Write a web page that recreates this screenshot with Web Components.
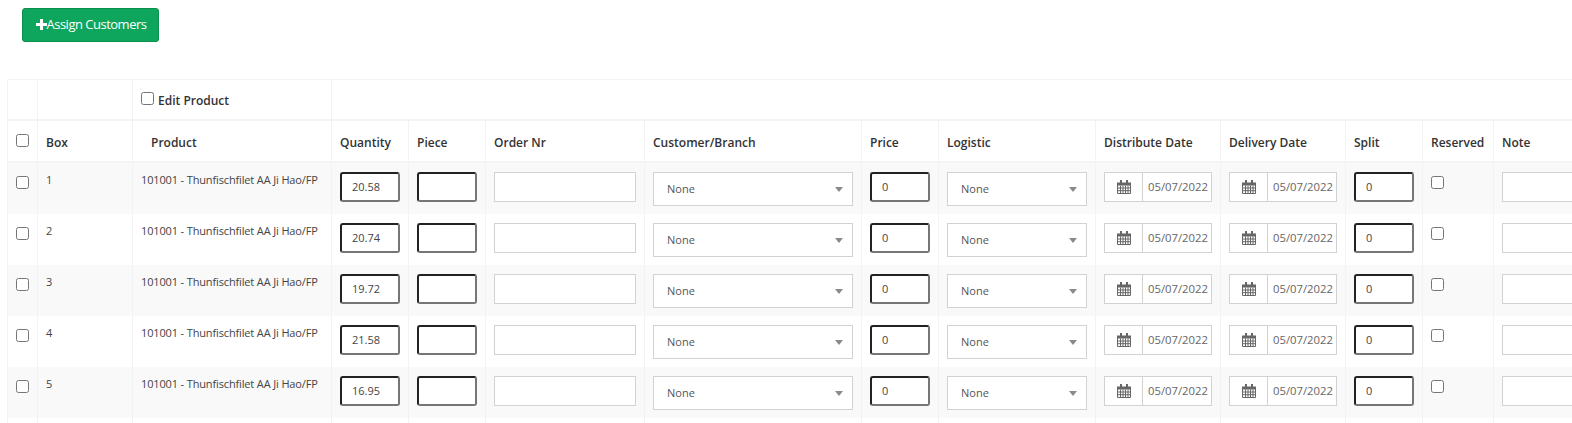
<!DOCTYPE html>
<html>
<head>
<meta charset="utf-8">
<title>Assign Customers</title>
<style>
    html, body { margin: 0; padding: 0; background: #fff; overflow: hidden; }
    body { font-family: "Open Sans", "Noto Sans", sans-serif; color: #333; width: 1572px; height: 423px; }
</style>
</head>
<body>
<assign-page></assign-page>

<script>
const COLUMNS = "30px 95px 199px 77px 77px 159px 217px 77px 157px 125px 125px 77px 71px 121px";

class AssignButton extends HTMLElement {
    constructor() {
        super();
        const shadow = this.attachShadow({mode: "open"});
        shadow.innerHTML = `
            <style>
                :host { display: inline-flex; }
                button {
                    display: flex;
                    align-items: center;
                    height: 34px;
                    width: 137px;
                    padding: 0 0 2px 13px;
                    border: 1px solid #0b8f4f;
                    border-radius: 3px;
                    background: #0ea55c;
                    color: #fff;
                    font: 400 13px "Open Sans", sans-serif;
                    letter-spacing: -0.5px;
                }
                svg { width: 11px; height: 11px; flex: none; margin-right: -0.5px; }
            </style>
            <button>
                <svg viewBox="0 0 11 11"><path fill="#fff" d="M4 0h3v4h4v3H7v4H4V7H0V4h4z"/></svg><slot></slot>
            </button>
        `;
    }
}

class CheckMark extends HTMLElement {
    constructor() {
        super();
        const shadow = this.attachShadow({mode: "open"});
        shadow.innerHTML = `
            <style>
                :host {
                    display: block;
                    box-sizing: border-box;
                    width: 13px;
                    height: 13px;
                    flex: none;
                    border: 1px solid #767676;
                    border-radius: 2.5px;
                    background: #fff;
                }
            </style>
        `;
    }
}

// number box with the browser's dark outset look
class NumberBox extends HTMLElement {
    constructor() {
        super();
        const shadow = this.attachShadow({mode: "open"});
        shadow.innerHTML = `
            <style>
                :host {
                    display: flex;
                    align-items: center;
                    box-sizing: border-box;
                    width: 60px;
                    height: 30px;
                    padding-left: 10px;
                    border: 2px solid;
                    border-color: #222 #767676 #767676 #222;
                    border-radius: 3px;
                    background: #fff;
                    font-size: 11px;
                    color: #444;
                }
            </style>
            <slot></slot>
        `;
    }
}

class PlainBox extends HTMLElement {
    constructor() {
        super();
        const shadow = this.attachShadow({mode: "open"});
        shadow.innerHTML = `
            <style>
                :host {
                    display: block;
                    box-sizing: border-box;
                    height: 30px;
                    border: 1px solid #d2d2d2;
                    background: #fff;
                }
            </style>
        `;
    }
}

class SelectBox extends HTMLElement {
    constructor() {
        super();
        const shadow = this.attachShadow({mode: "open"});
        shadow.innerHTML = `
            <style>
                :host {
                    display: flex;
                    align-items: center;
                    justify-content: space-between;
                    box-sizing: border-box;
                    height: 34px;
                    padding: 0 9px 0 13px;
                    border: 1px solid #d2d2d2;
                    background: #fff;
                    font-size: 11px;
                    color: #555;
                }
                i {
                    width: 0;
                    height: 0;
                    border-left: 4px solid transparent;
                    border-right: 4px solid transparent;
                    border-top: 5px solid #8a8a8a;
                }
            </style>
            <span><slot></slot></span><i></i>
        `;
    }
}

class DateBox extends HTMLElement {
    constructor() {
        super();
        const shadow = this.attachShadow({mode: "open"});
        shadow.innerHTML = `
            <style>
                :host {
                    display: flex;
                    box-sizing: border-box;
                    width: 108px;
                    height: 30px;
                    border: 1px solid #d2d2d2;
                    background: #fff;
                    font-size: 11.3px;
                    color: #666;
                }
                .icon {
                    display: flex;
                    align-items: center;
                    justify-content: center;
                    width: 37px;
                    flex: none;
                    border-right: 1px solid #d2d2d2;
                }
                .value { display: flex; align-items: center; padding-left: 5px; white-space: nowrap; }
                svg { width: 14px; height: 14px; }
            </style>
            <div class="icon">
                <svg viewBox="0 0 14 14" fill="none" stroke="#666" stroke-width="1">
                    <path d="M.5 3.5h13v10H.5z" />
                    <path fill="#666" stroke="none" d="M0 2.5h14v3H0zM3 .5a1 1 0 0 1 2 0v2H3zM9 .5a1 1 0 0 1 2 0v2H9z"/>
                    <path d="M.5 8h13M.5 10.7h13M3.5 5.5v8M6 5.5v8M8.5 5.5v8M11 5.5v8"/>
                </svg>
            </div>
            <div class="value"><slot></slot></div>
        `;
    }
}

class TableCell extends HTMLElement {
    constructor() {
        super();
        const shadow = this.attachShadow({mode: "open"});
        shadow.innerHTML = `
            <style>
                :host {
                    display: block;
                    box-sizing: border-box;
                    min-width: 0;
                    padding: 9px 8px 0;
                    border-right: 1px solid #f3f3f3;
                    font-size: 11px;
                    line-height: 18px;
                    white-space: nowrap;
                }
            </style>
            <slot></slot>
        `;
    }
}

class BoxRow extends HTMLElement {
    constructor() {
        super();
        const shadow = this.attachShadow({mode: "open"});
        const box = this.getAttribute("box");
        const qty = this.getAttribute("qty");
        const date = "05/07/2022";
        shadow.innerHTML = `
            <style>
                :host {
                    display: grid;
                    grid-template-columns: ${COLUMNS};
                    height: 51px;
                    box-sizing: border-box;
                }
                :host([odd]) { background: #f9f9f9; }
                check-mark { margin: 4px 0 0; }
                .first { padding-left: 8px; padding-right: 0; }
                .text { padding-top: 8px; color: #444; }
                .product { letter-spacing: -0.14px; }
            </style>
            <table-cell class="first"><check-mark></check-mark></table-cell>
            <table-cell class="text">${box}</table-cell>
            <table-cell class="text product">101001 - Thunfischfilet AA Ji Hao/FP</table-cell>
            <table-cell><number-box>${qty}</number-box></table-cell>
            <table-cell><number-box></number-box></table-cell>
            <table-cell><plain-box></plain-box></table-cell>
            <table-cell><select-box>None</select-box></table-cell>
            <table-cell><number-box>0</number-box></table-cell>
            <table-cell><select-box>None</select-box></table-cell>
            <table-cell><date-box>${date}</date-box></table-cell>
            <table-cell><date-box>${date}</date-box></table-cell>
            <table-cell><number-box>0</number-box></table-cell>
            <table-cell><check-mark></check-mark></table-cell>
            <table-cell><plain-box></plain-box></table-cell>
        `;
    }
}

class BoxTable extends HTMLElement {
    constructor() {
        super();
        const shadow = this.attachShadow({mode: "open"});
        const labels = ["Box", "Product", "Quantity", "Piece", "Order Nr", "Customer/Branch", "Price", "Logistic",
            "Distribute Date", "Delivery Date", "Split", "Reserved", "Note"];
        const heads = labels.map(l => `<div class="th${l === "Product" ? " product" : ""}">${l}</div>`).join("");
        const rows = [["1", "20.58"], ["2", "20.74"], ["3", "19.72"], ["4", "21.58"], ["5", "16.95"]]
            .map((r, i) => `<box-row box="${r[0]}" qty="${r[1]}" ${i % 2 === 0 ? "odd" : ""}></box-row>`).join("");
        const tail = COLUMNS.split(" ").map(() => `<div class="th"></div>`).join("");
        shadow.innerHTML = `
            <style>
                :host {
                    display: block;
                    width: 1565px;
                    margin-left: 7px;
                    overflow: hidden;
                    border-left: 1px solid #f3f3f3;
                    border-top: 1px solid #f3f3f3;
                }
                .top, .heads, .tail {
                    display: grid;
                    grid-template-columns: ${COLUMNS};
                    box-sizing: border-box;
                    border-bottom: 2px solid #f4f4f4;
                }
                .top { height: 41px; grid-template-columns: 30px 95px 199px 1fr; }
                .heads { height: 42px; }
                .tail { height: 10px; border-bottom: 0; }
                .th {
                    display: flex;
                    align-items: center;
                    box-sizing: border-box;
                    padding: 2px 0 0 8px;
                    border-right: 1px solid #f3f3f3;
                    font-size: 12px;
                    font-weight: 600;
                    white-space: nowrap;
                }
                .th.product { padding-left: 18px; }
                .edit { gap: 4px; }
                .edit check-mark { margin-top: -5px; }
                .first check-mark { margin-top: -3px; }
            </style>
            <div class="top">
                <div class="th"></div>
                <div class="th"></div>
                <div class="th edit"><check-mark></check-mark>Edit Product</div>
                <div class="th" style="border-right:0"></div>
            </div>
            <div class="heads">
                <div class="th first"><check-mark></check-mark></div>
                ${heads}
            </div>
            ${rows}
            <div class="tail">${tail}</div>
        `;
    }
}

class AssignPage extends HTMLElement {
    constructor() {
        super();
        const shadow = this.attachShadow({mode: "open"});
        shadow.innerHTML = `
            <style>
                :host { display: block; padding-top: 8px; }
                .bar { padding-left: 22px; height: 71px; }
            </style>
            <div class="bar"><assign-button>Assign Customers</assign-button></div>
            <box-table></box-table>
        `;
    }
}

window.customElements.define("assign-button", AssignButton);
window.customElements.define("check-mark", CheckMark);
window.customElements.define("number-box", NumberBox);
window.customElements.define("plain-box", PlainBox);
window.customElements.define("select-box", SelectBox);
window.customElements.define("date-box", DateBox);
window.customElements.define("table-cell", TableCell);
window.customElements.define("box-row", BoxRow);
window.customElements.define("box-table", BoxTable);
window.customElements.define("assign-page", AssignPage);
</script>
</body>
</html>
